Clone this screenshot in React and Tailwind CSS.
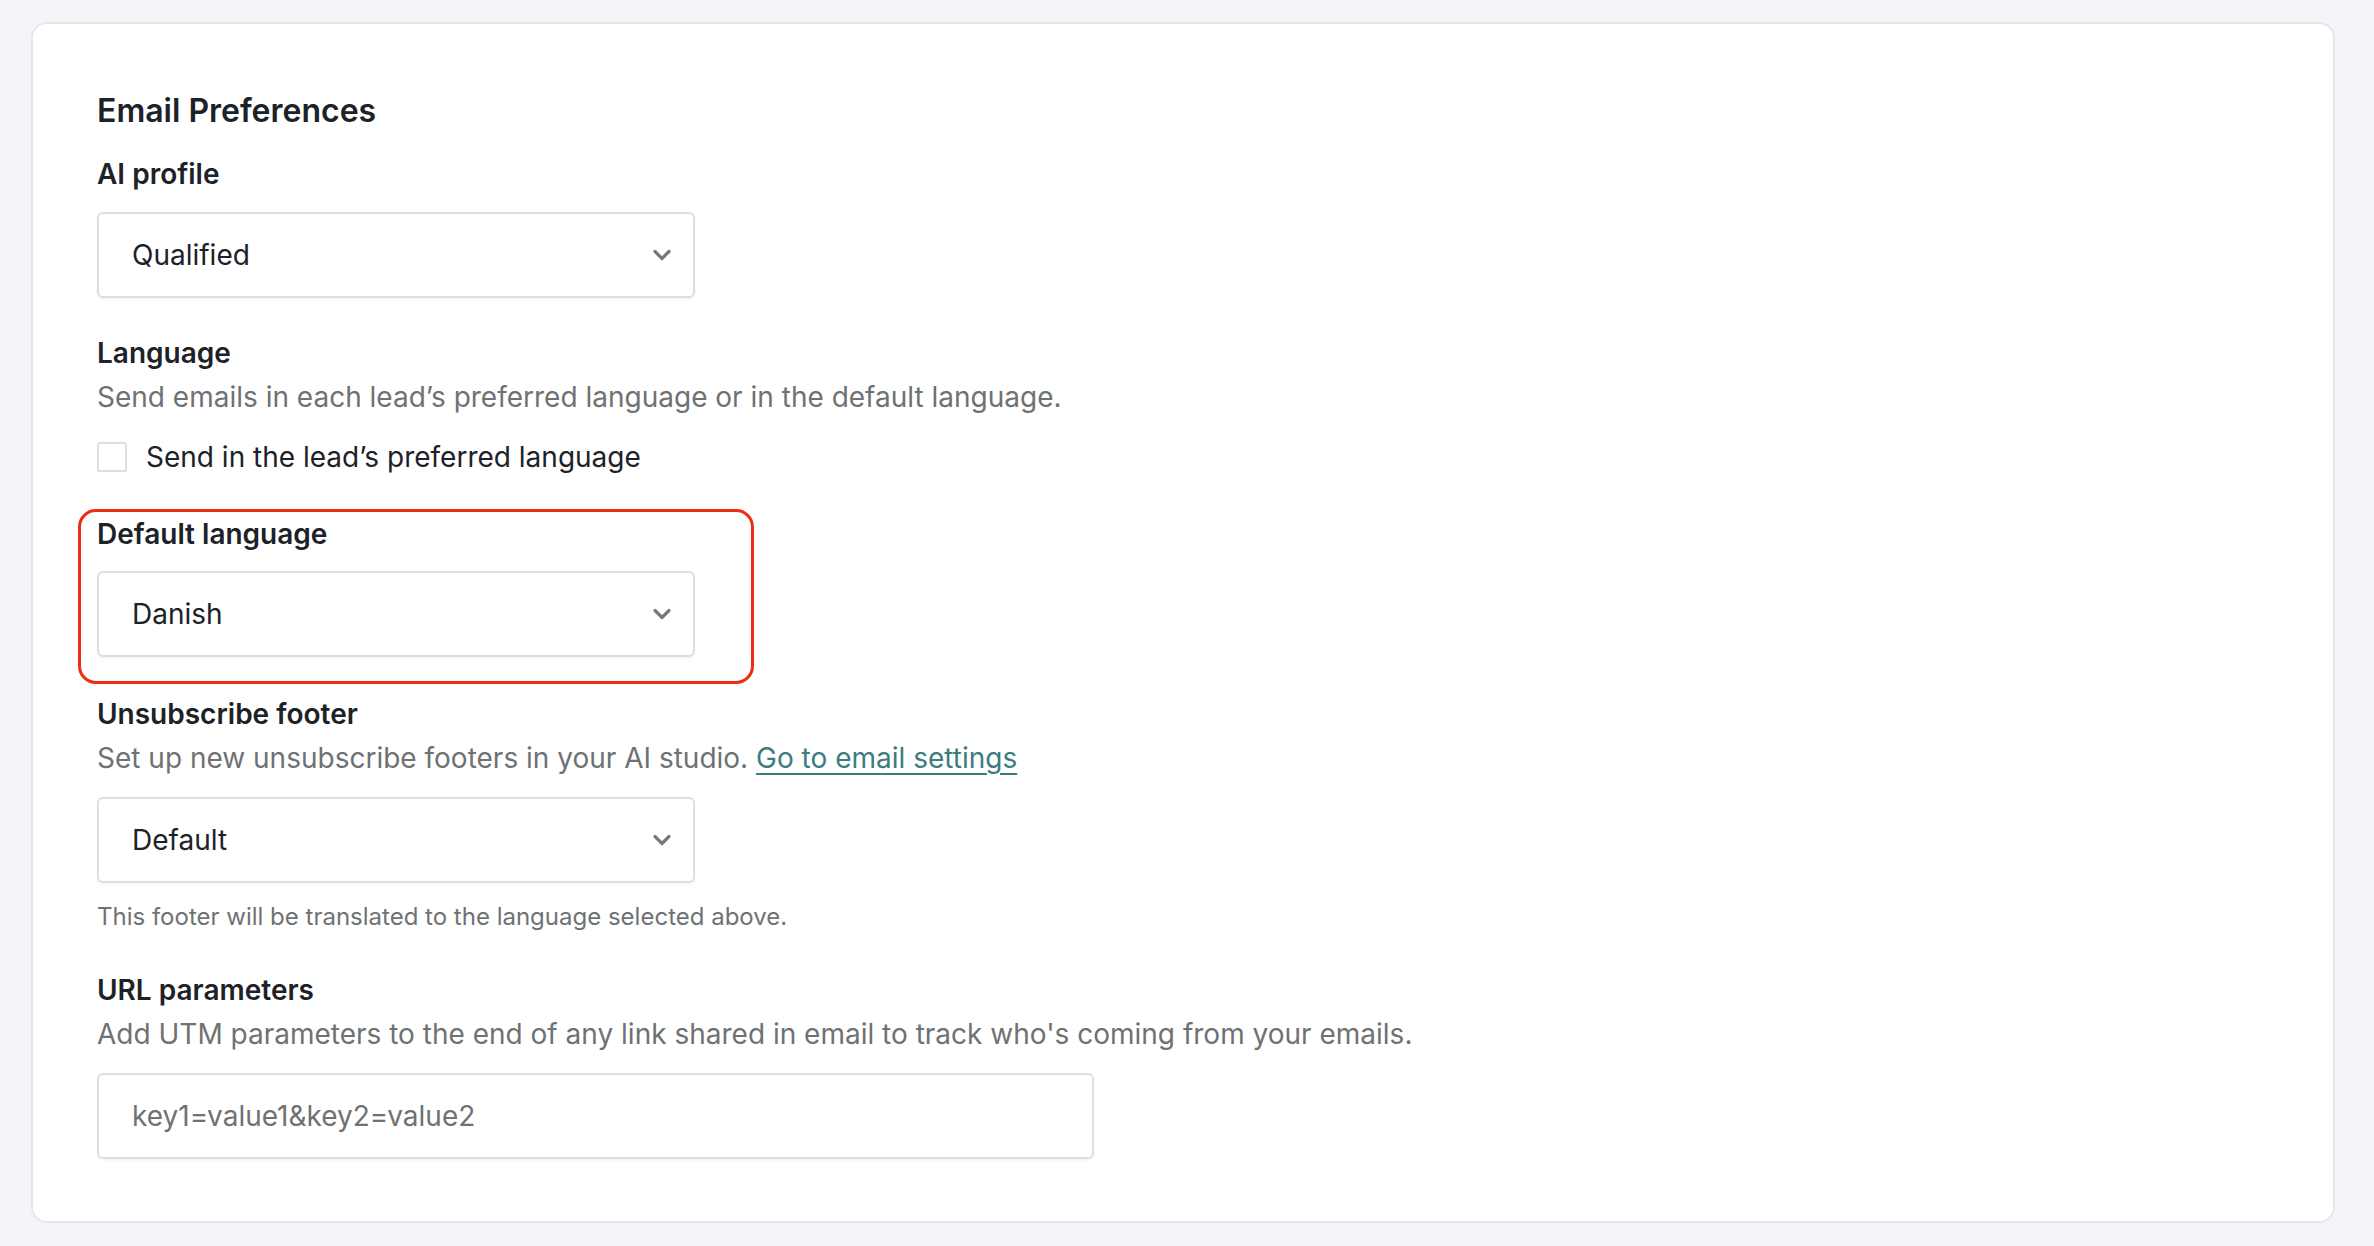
import React from 'react';

const Chevron = () => (
  <svg width="20" height="12" viewBox="0 0 20 12" fill="none" className="shrink-0">
    <path d="M3 2.5l7 7 7-7" stroke="#76797b" strokeWidth="3.2" strokeLinecap="round" strokeLinejoin="round" />
  </svg>
);

const Select = ({ value, className = '' }) => (
  <div className={`flex h-[86px] w-[598px] items-center justify-between rounded-[6px] border-2 border-[#dcdee2] bg-white pl-[33px] pr-[21px] shadow-[0_2px_3px_rgba(0,0,0,0.04)] ${className}`}>
    <span className="text-[28px] text-[#1c2227]">{value}</span>
    <Chevron />
  </div>
);

const Label = ({ children, className = '' }) => (
  <div className={`text-[28px] font-semibold leading-[36px] text-[#1c2227] ${className}`}>{children}</div>
);

const Hint = ({ children, className = '' }) => (
  <p className={`text-[28px] leading-[36px] text-[#6e7273] ${className}`}>{children}</p>
);

export default function App() {
  return (
    <div className="min-h-screen bg-[#f4f5f8] pl-[31px] pr-[39px] pt-[22px] pb-[23px] font-['Inter',sans-serif]">
      <div className="h-[1201px] rounded-[16px] border-2 border-[#e6e7ea] bg-white pl-[64px] pt-[67px]">
        {/* Email preferences form */}
        <h2 className="text-[32px] font-semibold leading-[40px] text-[#1c2227]">Email Preferences</h2>

        <Label className="mt-[25px]">AI profile</Label>
        <Select value="Qualified" className="mt-[20px]" />

        <Label className="mt-[37px]">Language</Label>
        <Hint className="mt-[8px]">Send emails in each lead’s preferred language or in the default language.</Hint>
        <label className="mt-[24px] flex items-center gap-[19px]">
          <span className="h-[30px] w-[30px] rounded-[2px] border-2 border-[#dcdee2] bg-white" />
          <span className="text-[28px] leading-[36px] text-[#1c2227]">Send in the lead’s preferred language</span>
        </label>

        <div className="-ml-[19px] mt-[34px] w-[676px] rounded-[18px] border-[3px] border-[#ee2b14] pl-[16px] pt-[4px] pb-[24px]">
          <Label>Default language</Label>
          <Select value="Danish" className="mt-[19px]" />
        </div>

        <Label className="mt-[12px]">Unsubscribe footer</Label>
        <Hint className="mt-[8px]">
          Set up new unsubscribe footers in your AI studio.{' '}
          <a href="#" className="text-[#3b7c80] underline underline-offset-[5px]">Go to email settings</a>
        </Hint>
        <Select value="Default" className="mt-[21px]" />
        <p className="mt-[19px] text-[24px] leading-[30px] text-[#6e7273]">This footer will be translated to the language selected above.</p>

        <Label className="mt-[40px]">URL parameters</Label>
        <Hint className="mt-[8px]">Add UTM parameters to the end of any link shared in email to track who's coming from your emails.</Hint>
        <input
          placeholder="key1=value1&key2=value2"
          className="mt-[21px] block h-[86px] w-[997px] rounded-[6px] border-2 border-[#dcdee2] bg-white pl-[33px] text-[28px] text-[#1c2227] shadow-[0_2px_3px_rgba(0,0,0,0.04)] outline-none placeholder:text-[#6e7273]"
        />
      </div>
    </div>
  );
}
